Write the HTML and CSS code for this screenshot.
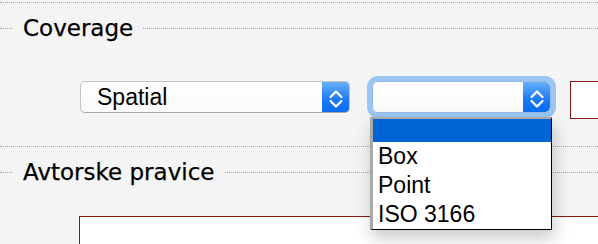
FILE: index.html
```html
<!DOCTYPE html>
<html>
<head>
<meta charset="utf-8">
<link rel="stylesheet" href="styles.css">
</head>
<body>
<div class="section">
  <fieldset class="group">
    <legend class="legend">Coverage</legend>
    <div class="row">
      <div class="select wide">
        <span class="value">Spatial</span>
        <span class="arrows"><svg width="28" height="32" viewBox="0 0 28 32"><path d="M8.5 16 L14 10.5 L19.5 16 M8.5 20 L14 25.5 L19.5 20" fill="none" stroke="#fff" stroke-width="2.2" stroke-linecap="round" stroke-linejoin="round"/></svg></span>
      </div>
      <div class="dropwrap">
        <div class="select narrow focused">
          <span class="value"></span>
          <span class="arrows"><svg width="28" height="32" viewBox="0 0 28 32"><path d="M8.5 16 L14 10.5 L19.5 16 M8.5 20 L14 25.5 L19.5 20" fill="none" stroke="#fff" stroke-width="2.2" stroke-linecap="round" stroke-linejoin="round"/></svg></span>
        </div>
        <ul class="menu">
          <li class="opt selected"></li>
          <li class="opt">Box</li>
          <li class="opt">Point</li>
          <li class="opt">ISO 3166</li>
        </ul>
      </div>
      <div class="input"></div>
    </div>
  </fieldset>
</div>
<div class="section">
  <fieldset class="group">
    <legend class="legend">Avtorske pravice</legend>
    <div class="area"></div>
  </fieldset>
</div>
</body>
</html>
```

FILE: styles.css
```css
html, body {
  margin: 0;
  padding: 0;
  background: #f4f4f4;
  overflow: hidden;
  width: 598px;
  height: 244px;
}

.section {
  margin-top: 2px;
  border-top: 1px dotted #a6a6a6;
}

.group {
  margin: 12px 0 0;
  padding: 0;
  border: 0;
  border-top: 1px dotted #a6a6a6;
  min-width: 0;
}

.legend {
  margin-left: 13px;
  padding: 0 10px;
  font-family: "DejaVu Sans", sans-serif;
  font-size: 23px;
  line-height: 26px;
  color: #000;
  -webkit-text-stroke: 0.25px #000;
}

.row {
  display: flex;
  align-items: flex-start;
  padding: 40px 0 0 80px;
  height: 63px;
}

.select {
  display: flex;
  flex: none;
  height: 32px;
  box-sizing: border-box;
  border: 1px solid #c4c4c4;
  border-bottom-color: #a9a9a9;
  border-radius: 5px;
  background: linear-gradient(#ffffff, #fafafa);
  overflow: hidden;
}

.select .value {
  flex: 1;
  padding-left: 16px;
  font-family: "Liberation Sans", Arial, sans-serif;
  font-size: 23px;
  line-height: 30px;
  color: #000;
}

.select .arrows {
  width: 28px;
  flex: none;
  background: linear-gradient(#6ab2fb, #1a77f6 60%, #0b6df3);
  display: flex;
  align-items: center;
  justify-content: center;
  margin: -1px -1px -1px 0;
}

.wide {
  width: 270px;
}

.dropwrap {
  position: relative;
  flex: none;
  margin-left: 22px;
}

.narrow {
  width: 179px;
}

.focused {
  border-color: #9bb8e0;
  box-shadow: 0 0 0 5px #9ac6f6;
  border-radius: 6px;
}

.menu {
  position: absolute;
  z-index: 5;
  left: -2px;
  top: 36px;
  width: 182px;
  box-sizing: border-box;
  margin: 0;
  padding: 0;
  list-style: none;
  background: #fff;
  border-left: 3px solid #a9a9a9;
  border-top: 2px solid #a9a9a9;
  border-right: 1px solid #000;
  border-bottom: 1px solid #000;
  box-shadow: 2px 8px 16px rgba(0, 0, 0, 0.22);
}

.opt {
  height: 29px;
  padding-left: 5px;
  font-family: "Liberation Sans", Arial, sans-serif;
  font-size: 23px;
  line-height: 29px;
  color: #000;
}

.opt.selected {
  height: 23px;
  background: #0064d4;
}

.input {
  margin-left: 19px;
  flex: 1;
  height: 38px;
  box-sizing: border-box;
  border: 1px solid #8a1a10;
  border-right: 0;
  background: #fff;
}

.area {
  margin: 31px 0 0 79px;
  height: 29px;
  box-sizing: border-box;
  border: 1px solid #8a1a10;
  border-right: 0;
  border-bottom: 0;
  background: #fff;
}
```
